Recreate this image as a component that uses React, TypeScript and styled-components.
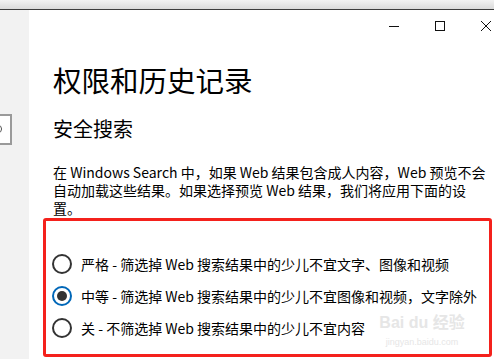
import React from "react";
import styled, { createGlobalStyle } from "styled-components";

const GlobalStyle = createGlobalStyle`
  html, body {
    margin: 0;
    padding: 0;
    background: #ffffff;
    overflow: hidden;
  }
  body {
    font-family: "Noto Sans CJK SC", "Noto Sans", sans-serif;
    color: #000;
  }
`;

const Frame = styled.div`
  width: 494px;
  height: 359px;
  overflow: hidden;
  display: flex;
  flex-direction: column;
  position: relative;
`;

const TopStrip = styled.div`
  height: 9px;
  flex: none;
  background: linear-gradient(#f2f2f2, #dadada);
  border-bottom: 1px solid #3c3c3c;
`;

const Body = styled.div`
  flex: 1;
  display: flex;
  min-height: 0;
`;

const Sidebar = styled.aside`
  width: 29px;
  flex: none;
  background: #f2f2f2;
  overflow: hidden;
  padding-top: 104px;
  box-sizing: border-box;
`;

const SearchBox = styled.div`
  width: 42px;
  height: 31px;
  margin-left: -30px;
  box-sizing: border-box;
  border: 2px solid #9a9a9a;
  background: #fff;
  display: flex;
  align-items: center;
  justify-content: flex-end;
  padding-right: 5px;
`;

const Main = styled.main`
  flex: 1;
  min-width: 0;
  padding-left: 24px;
  display: flex;
  flex-direction: column;
`;

const Controls = styled.div`
  height: 32px;
  flex: none;
  display: flex;
  justify-content: flex-end;
  margin-right: -15px;
`;

const ControlButton = styled.div`
  width: 46px;
  height: 32px;
  display: flex;
  align-items: center;
  justify-content: center;
`;

const Title = styled.h1`
  margin: 20px 0 0;
  font-size: 28.5px;
  line-height: 36px;
  font-weight: 400;
`;

const Subtitle = styled.h2`
  margin: 17px 0 0;
  font-size: 20px;
  line-height: 28px;
  font-weight: 400;
`;

const Paragraph = styled.p`
  margin: 20px 0 0;
  font-size: 14px;
  line-height: 18px;
  width: 440px;
`;

const RedBox = styled.div`
  margin: 1px 0 0 -10px;
  width: 449px;
  height: 139px;
  box-sizing: border-box;
  border: 3px solid #f4211c;
  border-radius: 3px;
  padding: 33px 0 0 6px;
  display: flex;
  flex-direction: column;
  gap: 12px;
`;

const Option = styled.label`
  display: flex;
  align-items: center;
  gap: 9px;
  height: 20px;
  font-size: 14px;
  line-height: 20px;
  white-space: nowrap;
`;

const RadioCircle = styled.span<{ $checked?: boolean }>`
  width: 20px;
  height: 20px;
  flex: none;
  box-sizing: border-box;
  border-radius: 50%;
  border: 2px solid ${(p) => (p.$checked ? "#0067b8" : "#333333")};
  display: flex;
  align-items: center;
  justify-content: center;
  &::after {
    content: "";
    width: 10px;
    height: 10px;
    border-radius: 50%;
    background: #333333;
    display: ${(p) => (p.$checked ? "block" : "none")};
  }
`;

const Watermark = styled.div`
  position: absolute;
  left: 377px;
  top: 302px;
  width: 90px;
  display: flex;
  flex-direction: column;
  align-items: center;
  color: #e6e6e6;
  pointer-events: none;
  white-space: nowrap;
`;

const WatermarkLogo = styled.div`
  font-family: "Liberation Sans", "Noto Sans CJK SC", sans-serif;
  font-size: 16px;
  font-weight: 700;
  line-height: 18px;
  margin-top: 12px;
`;

const WatermarkUrl = styled.div`
  font-family: "Liberation Sans", sans-serif;
  font-size: 9px;
  line-height: 12px;
  margin-top: 4px;
`;

const options = [
  { label: "严格 - 筛选掉 Web 搜索结果中的少儿不宜文字、图像和视频", checked: false },
  { label: "中等 - 筛选掉 Web 搜索结果中的少儿不宜图像和视频，文字除外", checked: true },
  { label: "关 - 不筛选掉 Web 搜索结果中的少儿不宜内容", checked: false },
];

export default function App() {
  return (
    <>
      <GlobalStyle />
      <Frame>
        <TopStrip />
        <Body>
          <Sidebar>
            <SearchBox>
              <svg width="12" height="12" viewBox="0 0 12 12">
                <circle cx="5" cy="5" r="3.6" fill="none" stroke="#555" strokeWidth="1" />
              </svg>
            </SearchBox>
          </Sidebar>
          <Main>
            <Controls>
              <ControlButton>
                <svg width="10" height="10" viewBox="0 0 10 10">
                  <line x1="0" y1="5.5" x2="10" y2="5.5" stroke="#111" strokeWidth="1" />
                </svg>
              </ControlButton>
              <ControlButton>
                <svg width="10" height="10" viewBox="0 0 10 10">
                  <rect x="0.5" y="0.5" width="9" height="9" fill="none" stroke="#111" strokeWidth="1" />
                </svg>
              </ControlButton>
              <ControlButton>
                <svg width="10" height="10" viewBox="0 0 10 10">
                  <path d="M0 0 L10 10 M10 0 L0 10" stroke="#111" strokeWidth="1" />
                </svg>
              </ControlButton>
            </Controls>
            <Title>权限和历史记录</Title>
            <Subtitle>安全搜索</Subtitle>
            <Paragraph>
              在 Windows Search 中，如果 Web 结果包含成人内容，Web 预览不会自动加载这些结果。如果选择预览 Web 结果，我们将应用下面的设置。
            </Paragraph>
            <RedBox>
              {options.map((o) => (
                <Option key={o.label}>
                  <RadioCircle $checked={o.checked} />
                  {o.label}
                </Option>
              ))}
            </RedBox>
          </Main>
        </Body>
        <Watermark>
          <WatermarkLogo>Bai du 经验</WatermarkLogo>
          <WatermarkUrl>jingyan.baidu.com</WatermarkUrl>
        </Watermark>
      </Frame>
    </>
  );
}
